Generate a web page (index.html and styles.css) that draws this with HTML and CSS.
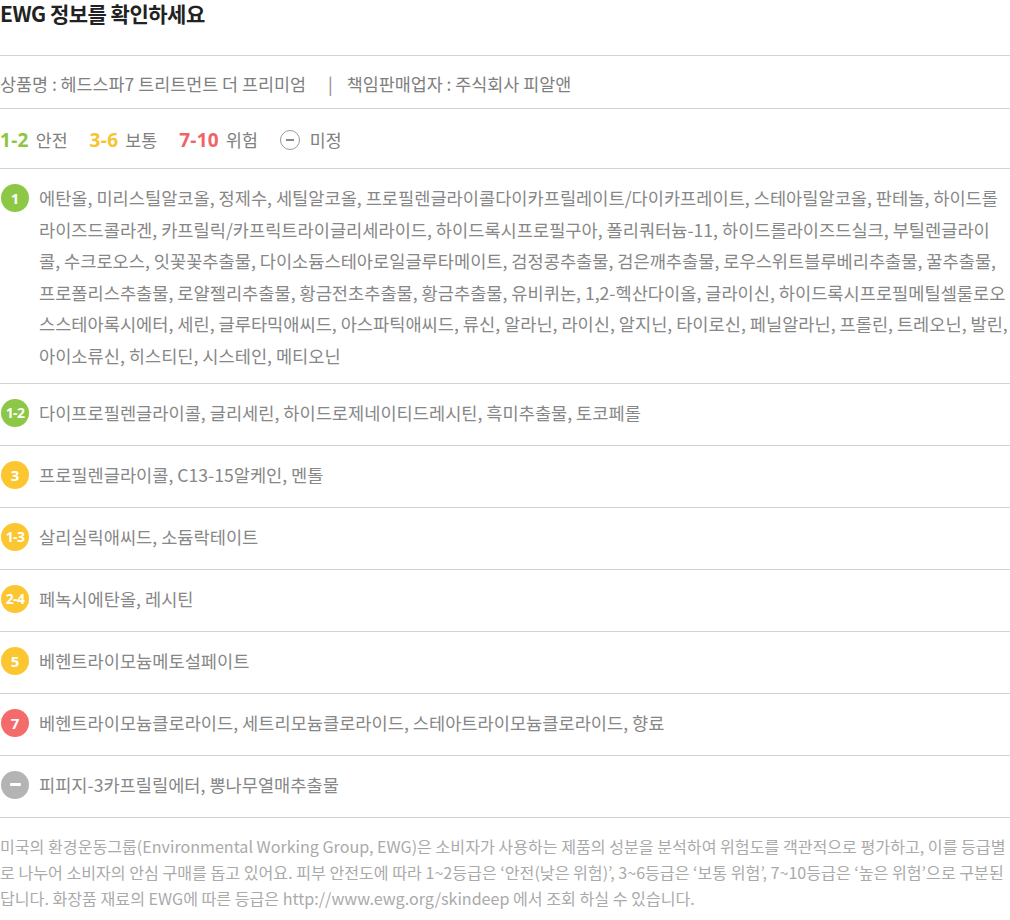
FILE: index.html
```html
<!DOCTYPE html>
<html>
	<head>
		<meta charset="utf-8" />
		<title>EWG 정보</title>
		<link rel="stylesheet" href="styles.css">
	</head>
	<body>
		<div id="ewg_wrap">
			<h2 class="ewg_title">EWG 정보를 확인하세요</h2>
			<div class="ewg_product">
				상품명 : 헤드스파7 트리트먼트 더 프리미엄<span class="bar">|</span>책임판매업자 : 주식회사 피알앤
			</div>
			<div class="ewg_legend">
				<span class="lv green">1-2</span><span class="lv_txt">안전</span>
				<span class="lv yellow">3-6</span><span class="lv_txt">보통</span>
				<span class="lv red">7-10</span><span class="lv_txt">위험</span>
				<span class="lv_none"></span><span class="lv_txt">미정</span>
			</div>
			<ul class="ewg_list">
				<li class="multi">
					<span class="grade green">1</span>
					<p>에탄올, 미리스틸알코올, 정제수, 세틸알코올, 프로필렌글라이콜다이카프릴레이트/다이카프레이트, 스테아릴알코올, 판테놀, 하이드롤라이즈드콜라겐, 카프릴릭/카프릭트라이글리세라이드, 하이드록시프로필구아, 폴리쿼터늄-11, 하이드롤라이즈드실크, 부틸렌글라이콜, 수크로오스, 잇꽃꽃추출물, 다이소듐스테아로일글루타메이트, 검정콩추출물, 검은깨추출물, 로우스위트블루베리추출물, 꿀추출물, 프로폴리스추출물, 로얄젤리추출물, 황금전초추출물, 황금추출물, 유비퀴논, 1,2-헥산다이올, 글라이신, 하이드록시프로필메틸셀룰로오스스테아록시에터, 세린, 글루타믹애씨드, 아스파틱애씨드, 류신, 알라닌, 라이신, 알지닌, 타이로신, 페닐알라닌, 프롤린, 트레오닌, 발린, 아이소류신, 히스티딘, 시스테인, 메티오닌</p>
				</li>
				<li>
					<span class="grade green small">1-2</span>
					<p>다이프로필렌글라이콜, 글리세린, 하이드로제네이티드레시틴, 흑미추출물, 토코페롤</p>
				</li>
				<li>
					<span class="grade yellow">3</span>
					<p>프로필렌글라이콜, C13-15알케인, 멘톨</p>
				</li>
				<li>
					<span class="grade yellow small">1-3</span>
					<p>살리실릭애씨드, 소듐락테이트</p>
				</li>
				<li>
					<span class="grade yellow small">2-4</span>
					<p>페녹시에탄올, 레시틴</p>
				</li>
				<li>
					<span class="grade yellow">5</span>
					<p>베헨트라이모늄메토설페이트</p>
				</li>
				<li>
					<span class="grade red">7</span>
					<p>베헨트라이모늄클로라이드, 세트리모늄클로라이드, 스테아트라이모늄클로라이드, 향료</p>
				</li>
				<li>
					<span class="grade gray"><i class="minus"></i></span>
					<p>피피지-3카프릴릴에터, 뽕나무열매추출물</p>
				</li>
			</ul>
			<p class="ewg_note">미국의 환경운동그룹(Environmental Working Group, EWG)은 소비자가 사용하는 제품의 성분을 분석하여 위험도를 객관적으로 평가하고, 이를 등급별로 나누어 소비자의 안심 구매를 돕고 있어요. 피부 안전도에 따라 1~2등급은 ‘안전(낮은 위험)’, 3~6등급은 ‘보통 위험’, 7~10등급은 ‘높은 위험’으로 구분된답니다. 화장품 재료의 EWG에 따른 등급은 http://www.ewg.org/skindeep 에서 조회 하실 수 있습니다.</p>
		</div>
	</body>
</html>
```

FILE: styles.css
```css
*{
	margin:0;
	padding:0;
	list-style: none;
}
body{
	background: #fff;
	font-family: "Noto Sans CJK KR", "Noto Sans", sans-serif;
}
#ewg_wrap{
	width:1010px;
}
.ewg_title{
	height: 55px;
	font-size: 21px;
	line-height: 26px;
	font-weight: 700;
	color: #222;
	letter-spacing: -0.5px;
}
.ewg_product{
	border-top: 1px solid #d2d2d2;
	padding: 17px 0 13px;
	line-height: 22px;
	font-size: 17.4px;
	color: #808080;
}
	.ewg_product .bar{
		margin: 0 14px 0 22px;
		color: #888;
	}
.ewg_legend{
	border-top: 1px solid #d2d2d2;
	padding: 19px 0 16px;
	line-height: 24px;
	font-size: 17.3px;
	color: #808080;
	display: flex;
	align-items: center;
}
	.lv{
		font-family: "Open Sans", "Noto Sans", sans-serif;
		font-weight: 700;
		font-size: 19px;
		letter-spacing: 0.3px;
		margin-right: 7px;
	}
	.lv_txt{margin-right: 22px;}
	.lv_none{
		width: 18px;
		height: 18px;
		border: 1.5px solid #999;
		border-radius: 50%;
		margin-right: 10px;
		position: relative;
	}
	.lv_none:after{
		content: "";
		position: absolute;
		left: 5px;
		top: 8.25px;
		width: 8px;
		height: 1.5px;
		background: #888;
	}
.green{color: #8dc63f;}
.yellow{color: #f7c430;}
.red{color: #ef6467;}
.ewg_list>li{
	border-top: 1px solid #d2d2d2;
	padding: 13px 0 16.4px;
	display: flex;
	align-items: flex-start;
}
	.ewg_list>li.multi{padding-bottom: 11.4px;}
	.ewg_list p{
		flex: 1;
		font-size: 17.6px;
		line-height: 31.6px;
		color: #878787;
	}
	.grade{
		width: 28px;
		height: 28px;
		border-radius: 50%;
		margin: 2px 10px 0 1px;
		flex: none;
		display: flex;
		align-items: center;
		justify-content: center;
		color: #fff;
		font-family: "Open Sans", "Noto Sans", sans-serif;
		font-size: 15px;
		font-weight: 700;
		position: relative;
	}
	.grade.small{
		font-size: 14px;
		letter-spacing: -0.6px;
	}
	.grade.green{background: #8dc746;color: #fff;}
	.grade.yellow{background: #fbc62f;color: #fff;}
	.grade.red{background: #f46b6b;color: #fff;}
	.grade.gray{background: #b4b4b4;}
	.minus{
		width: 11px;
		height: 3px;
		background: #fff;
		border-radius: 1px;
	}
.ewg_note{
	border-top: 1px solid #d2d2d2;
	padding-top: 15px;
	font-size: 16.1px;
	line-height: 26px;
	color: #aaa;
}
```
